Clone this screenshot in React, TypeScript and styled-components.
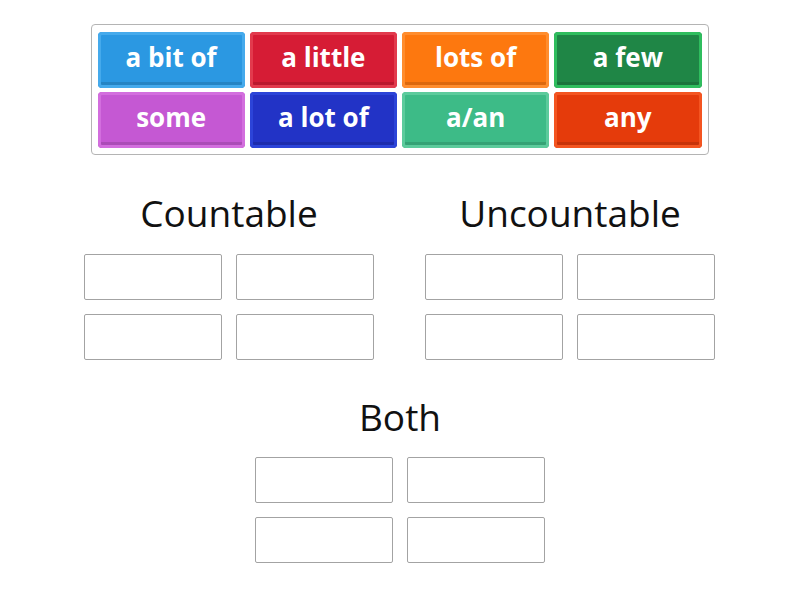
import React from "react";
import styled, { createGlobalStyle } from "styled-components";

const GlobalStyle = createGlobalStyle`
  html, body {
    margin: 0;
    padding: 0;
    background: #ffffff;
  }
  body {
    font-family: "Open Sans", "Noto Sans", sans-serif;
    color: #000;
  }
`;

const Page = styled.div`
  width: 800px;
  height: 600px;
  display: flex;
  flex-direction: column;
  align-items: center;
  box-sizing: border-box;
  padding-top: 24px;
`;

const Tray = styled.div`
  box-sizing: border-box;
  width: 618px;
  margin-left: -1px;
  border: 1px solid #b4b4b4;
  border-radius: 4px;
  padding: 7px 6px 6px 6px;
  display: grid;
  grid-template-columns: repeat(4, 1fr);
  grid-auto-rows: 56px;
  column-gap: 5px;
  row-gap: 4px;
`;

const Tile = styled.div<{ $bg: string; $edge: string }>`
  position: relative;
  border-radius: 4px;
  background: ${(p) => p.$bg};
  box-shadow: inset 0 0 0 3px ${(p) => p.$edge}, inset 0 -6px 0 rgba(0, 0, 0, 0.13);
  display: flex;
  align-items: center;
  justify-content: center;
  color: #ffffff;
  font-family: "Open Sans", sans-serif;
  font-weight: 700;
  font-size: 26px;
  line-height: 1;
  padding-bottom: 6px;
  box-sizing: border-box;
`;

const Groups = styled.div`
  margin-top: 34px;
  margin-left: -1px;
  display: grid;
  grid-template-columns: 340px 340px;
  column-gap: 1px;
`;

const Group = styled.div`
  display: flex;
  flex-direction: column;
  align-items: center;
`;

const Heading = styled.div`
  font-family: "Open Sans", sans-serif;
  font-weight: 400;
  font-size: 37px;
  line-height: 48px;
  color: #111;
  text-align: center;
  white-space: nowrap;
`;

const Slots = styled.div`
  margin-top: 17px;
  display: grid;
  grid-template-columns: 138px 138px;
  grid-auto-rows: 46px;
  gap: 14px;
`;

const Slot = styled.div`
  box-sizing: border-box;
  border: 1px solid #a3a3a3;
  border-radius: 2px;
  background: #fff;
`;

const BothGroup = styled(Group)`
  margin-top: 33px;
  & > ${Slots} {
    margin-top: 16px;
  }
`;

const tiles = [
  { text: "a bit of", bg: "#2b98e2", edge: "#45aaec" },
  { text: "a little", bg: "#d61c35", edge: "#e23a4d" },
  { text: "lots of", bg: "#fd780f", edge: "#ff8d2e" },
  { text: "a few", bg: "#1f8646", edge: "#2fbd5e" },
  { text: "some", bg: "#c558d3", edge: "#d36ede" },
  { text: "a lot of", bg: "#2233c6", edge: "#2c44d8" },
  { text: "a/an", bg: "#3dbb87", edge: "#5ccb9c" },
  { text: "any", bg: "#e53b0b", edge: "#f45521" },
];

const SlotGrid = () => (
  <Slots>
    <Slot />
    <Slot />
    <Slot />
    <Slot />
  </Slots>
);

export default function App() {
  return (
    <>
      <GlobalStyle />
      <Page>
        <Tray>
          {tiles.map((t) => (
            <Tile key={t.text} $bg={t.bg} $edge={t.edge}>
              {t.text}
            </Tile>
          ))}
        </Tray>
        <Groups>
          <Group>
            <Heading>Countable</Heading>
            <SlotGrid />
          </Group>
          <Group>
            <Heading>Uncountable</Heading>
            <SlotGrid />
          </Group>
        </Groups>
        <BothGroup>
          <Heading>Both</Heading>
          <SlotGrid />
        </BothGroup>
      </Page>
    </>
  );
}
